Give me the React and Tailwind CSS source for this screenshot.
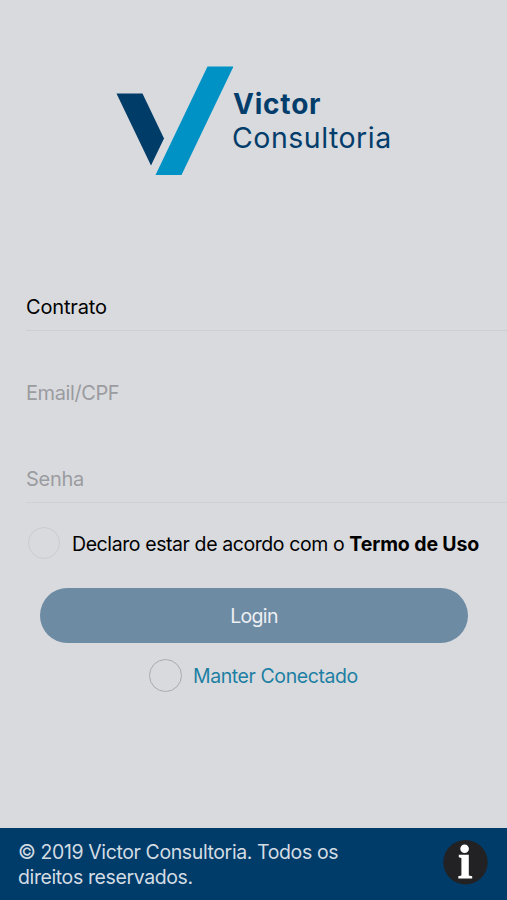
import { useState } from 'react';

function Logo() {
    return (
        <div className="flex h-[110px] pl-[116px] text-[#033d6b]">
            <svg width="117" height="110" viewBox="0 0 117 110" className="shrink-0">
                <path d="M0.5 27.5H26.5L48 72.5L35 99.5Z" fill="#003c68" />
                <path d="M91.5 0.5H117.5L65.5 109H39.5Z" fill="#0092c5" />
            </svg>
            <div className="flex flex-col pt-[21px]">
                <span className="text-[28px] leading-[34px] font-bold tracking-[0.8px]">Victor</span>
                <span className="text-[28.5px] leading-[34px] font-normal tracking-[0.5px] -ml-px">Consultoria</span>
            </div>
        </div>
    );
}

function Field({ placeholder, type = 'text', className }) {
    return (
        <div className="flex h-[86px] items-end pl-[26px]">
            <input
                type={type}
                placeholder={placeholder}
                className={`h-[50px] w-full bg-transparent pt-[2px] text-[20px] outline-none ${className}`}
            />
        </div>
    );
}

export default function App() {
    const [accepted, setAccepted] = useState(false);
    const [keepConnected, setKeepConnected] = useState(false);

    return (
        <div className="flex h-[900px] w-[507px] flex-col overflow-hidden bg-[#d9dade] pt-[66px] font-['Inter',sans-serif] text-black">
            <Logo />

            {/* Login fields */}
            <div className="mt-[69px] flex flex-col">
                <Field placeholder="Contrato" className="border-b border-[#cdced2] tracking-[-0.15px] placeholder:text-black" />
                <Field placeholder="Email/CPF" className="tracking-[-0.4px] placeholder:text-[#9b9ca0]" />
                <Field type="password" placeholder="Senha" className="border-b border-[#d0d1d5] tracking-[-0.3px] placeholder:text-[#9b9ca0]" />
            </div>

            <div className="mt-[24px] flex h-8 items-center pl-7">
                <button
                    onClick={() => setAccepted(!accepted)}
                    className={`size-8 shrink-0 rounded-full border border-[#cbccd0] ${accepted ? 'bg-[#6d8ba3]' : ''}`}
                />
                <span className="ml-3 pt-[3px] whitespace-nowrap text-[19.5px] tracking-[-0.41px]">
                    Declaro estar de acordo com o <b className="tracking-[-0.12px]">Termo de Uso</b>
                </span>
            </div>

            <button className="mt-[29px] ml-10 h-[55px] w-[428px] shrink-0 rounded-full bg-[#6d8ba3] pt-[2px] text-[19.5px] tracking-[-0.7px] text-[#eceff3]">
                Login
            </button>

            <div className="mt-[15px] flex h-[34px] items-center pl-[149px]">
                <button
                    onClick={() => setKeepConnected(!keepConnected)}
                    className={`size-[33px] shrink-0 rounded-full border border-[#a9aaae] ${keepConnected ? 'bg-[#6d8ba3]' : ''}`}
                />
                <span className="ml-[11px] pt-[3px] whitespace-nowrap text-[19.5px] tracking-[-0.42px] text-[#1d80a3]">
                    Manter Conectado
                </span>
            </div>

            <footer className="mt-auto flex h-[72px] shrink-0 items-center justify-between bg-[#003c69] pr-[19px] pl-[18px] text-[#d3dbe3]">
                <p className="w-[350px] pt-[2px] text-[19.5px] leading-[25px] tracking-[-0.39px]">
                    © 2019 Victor Consultoria. Todos os
                    <br />
                    direitos reservados.
                </p>
                <svg width="45" height="45" viewBox="0 0 45 45" className="mt-[-3px]">
                    <circle cx="22.5" cy="22.3" r="22.2" fill="#222224" />
                    <circle cx="21.6" cy="8.8" r="4.3" fill="#fff" />
                    <path d="M15.8 14.8H25.8V35.5L29.2 36.2V38.5H15.3V36.2L18.4 35.5V18L15.8 17.2Z" fill="#fff" />
                </svg>
            </footer>
        </div>
    );
}
